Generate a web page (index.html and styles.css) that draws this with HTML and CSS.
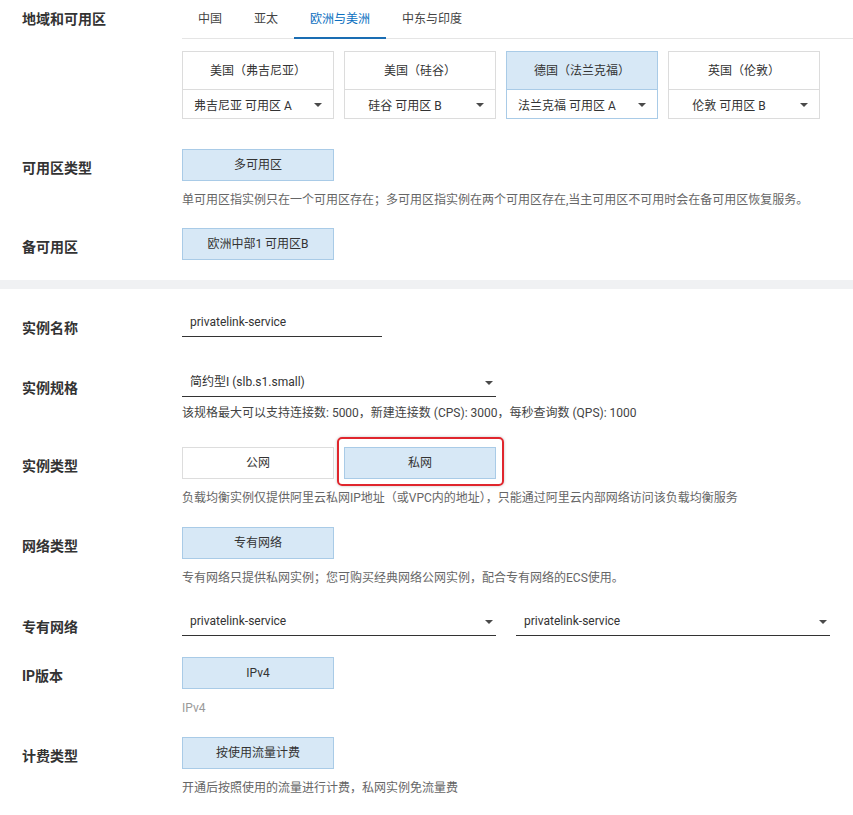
FILE: index.html
```html
<!DOCTYPE html>
<html lang="zh">
<head>
<meta charset="utf-8">
<link rel="stylesheet" href="styles.css">
</head>
<body>
<div class="section">
  <div class="row row-region">
    <div class="label label-region">地域和可用区</div>
    <div class="content">
      <div class="tabs">
        <div class="tab">中国</div>
        <div class="tab">亚太</div>
        <div class="tab active">欧洲与美洲</div>
        <div class="tab">中东与印度</div>
      </div>
      <div class="cards">
        <div class="card">
          <div class="card-head">美国（弗吉尼亚）</div>
          <div class="card-sel"><span class="card-text">弗吉尼亚 可用区 A</span><span class="card-caret"><i class="caret"></i></span></div>
        </div>
        <div class="card">
          <div class="card-head">美国（硅谷）</div>
          <div class="card-sel"><span class="card-text">硅谷 可用区 B</span><span class="card-caret"><i class="caret"></i></span></div>
        </div>
        <div class="card selected">
          <div class="card-head">德国（法兰克福）</div>
          <div class="card-sel"><span class="card-text">法兰克福 可用区 A</span><span class="card-caret"><i class="caret"></i></span></div>
        </div>
        <div class="card">
          <div class="card-head">英国（伦敦）</div>
          <div class="card-sel"><span class="card-text">伦敦 可用区 B</span><span class="card-caret"><i class="caret"></i></span></div>
        </div>
      </div>
    </div>
  </div>

  <div class="row mt30">
    <div class="label">可用区类型</div>
    <div class="content">
      <div class="btn-group"><div class="btn on">多可用区</div></div>
      <div class="desc">单可用区指实例只在一个可用区存在；多可用区指实例在两个可用区存在,当主可用区不可用时会在备可用区恢复服务。</div>
    </div>
  </div>

  <div class="row mt19">
    <div class="label">备可用区</div>
    <div class="content">
      <div class="btn-group"><div class="btn on">欧洲中部1 可用区B</div></div>
    </div>
  </div>
</div>

<div class="divider"></div>

<div class="section section-2">
  <div class="row mt20">
    <div class="label">实例名称</div>
    <div class="content">
      <div class="field w200">privatelink-service</div>
    </div>
  </div>

  <div class="row mt31">
    <div class="label">实例规格</div>
    <div class="content">
      <div class="field w314 select"><span>简约型I (slb.s1.small)</span><i class="caret"></i></div>
      <div class="desc desc-tight">该规格最大可以支持连接数: 5000，新建连接数 (CPS): 3000，每秒查询数 (QPS): 1000</div>
    </div>
  </div>

  <div class="row mt25">
    <div class="label">实例类型</div>
    <div class="content">
      <div class="btn-group">
        <div class="btn">公网</div>
        <div class="btn on highlighted">私网<span class="highlight"></span></div>
      </div>
      <div class="desc">负载均衡实例仅提供阿里云私网IP地址（或VPC内的地址），只能通过阿里云内部网络访问该负载均衡服务</div>
    </div>
  </div>

  <div class="row mt20">
    <div class="label">网络类型</div>
    <div class="content">
      <div class="btn-group"><div class="btn on">专有网络</div></div>
      <div class="desc">专有网络只提供私网实例；您可购买经典网络公网实例，配合专有网络的ECS使用。</div>
    </div>
  </div>

  <div class="row mt21">
    <div class="label">专有网络</div>
    <div class="content">
      <div class="field-pair">
        <div class="field w314 select"><span>privatelink-service</span><i class="caret"></i></div>
        <div class="field w314 select"><span>privatelink-service</span><i class="caret"></i></div>
      </div>
    </div>
  </div>

  <div class="row mt20">
    <div class="label">IP版本</div>
    <div class="content">
      <div class="btn-group"><div class="btn on">IPv4</div></div>
      <div class="desc light">IPv4</div>
    </div>
  </div>

  <div class="row mt20">
    <div class="label">计费类型</div>
    <div class="content">
      <div class="btn-group"><div class="btn on">按使用流量计费</div></div>
      <div class="desc">开通后按照使用的流量进行计费，私网实例免流量费</div>
    </div>
  </div>
</div>
</body>
</html>
```

FILE: styles.css
```css
* { box-sizing: border-box; }

html, body {
  margin: 0;
  padding: 0;
  background: #ffffff;
}

body {
  font-family: Roboto, "Noto Sans CJK SC", "Noto Sans", sans-serif;
  font-size: 12px;
  color: #333333;
  width: 853px;
  overflow: hidden;
}

.section {
  padding-bottom: 20px;
}

.section-2 {
  padding-bottom: 19px;
}

.divider {
  height: 9px;
  background: #f0f1f3;
}

.row {
  display: flex;
  align-items: flex-start;
  padding-left: 22px;
}

.mt19 { margin-top: 19px; }
.mt20 { margin-top: 20px; }
.mt21 { margin-top: 21px; }
.mt25 { margin-top: 25px; }
.mt30 { margin-top: 30px; }
.mt31 { margin-top: 31px; }

.label {
  width: 160px;
  flex: none;
  font-size: 14px;
  font-weight: 700;
  line-height: 20px;
  padding-top: 9px;
  color: #333333;
}

.label-region {
  padding-top: 9px;
}

.content {
  flex: 1;
  min-width: 0;
}

/* Tabs */
.tabs {
  display: flex;
  height: 39px;
  border-bottom: 1px solid #e5e5e5;
}

.tab {
  padding: 0 16px;
  line-height: 38px;
  height: 39px;
  color: #444444;
  font-size: 12px;
}

.tab.active {
  color: #0b6fc0;
  border-bottom: 2px solid #1a6db3;
  height: 39px;
  line-height: 38px;
}

/* Region cards */
.cards {
  display: flex;
  gap: 10px;
  margin-top: 12px;
}

.card {
  width: 152px;
  border: 1px solid #dcdcdc;
  background: #ffffff;
}

.card-head {
  height: 38px;
  line-height: 38px;
  text-align: center;
  border-bottom: 1px solid #dcdcdc;
  color: #333333;
}

.card-sel {
  display: flex;
  height: 28px;
  align-items: center;
  padding-top: 1px;
}

.card-text {
  flex: 1;
  text-align: center;
  color: #333333;
  white-space: nowrap;
}

.card-caret {
  width: 30px;
  flex: none;
  display: flex;
  justify-content: center;
}

.card.selected {
  border-color: #a9cbe7;
}

.card.selected .card-head {
  background: #d7e8f6;
  border-bottom-color: #a9cbe7;
}

.caret {
  display: inline-block;
  width: 0;
  height: 0;
  border-left: 4px solid transparent;
  border-right: 4px solid transparent;
  border-top: 4px solid #4a4a4a;
}

/* Buttons */
.btn-group {
  display: flex;
  gap: 10px;
}

.btn {
  position: relative;
  width: 152px;
  height: 32px;
  line-height: 30px;
  text-align: center;
  border: 1px solid #dddddd;
  background: #ffffff;
  color: #333333;
  font-size: 12px;
}

.btn.on {
  background: #d7e8f6;
  border-color: #a9cbe7;
}

.highlight {
  position: absolute;
  left: -8px;
  right: -9px;
  top: -11px;
  bottom: -8px;
  border: 2px solid #e0262d;
  border-radius: 5px;
  box-shadow: 0 0 3px rgba(0, 0, 0, 0.25);
  pointer-events: none;
}

/* Descriptions */
.desc {
  margin-top: 10px;
  line-height: 18px;
  color: #666666;
  font-size: 12px;
  white-space: nowrap;
}

.desc-tight {
  margin-top: 7px;
  color: #444444;
}

.desc.light {
  color: #999999;
}

/* Fields */
.field {
  height: 28px;
  border-bottom: 1px solid #333333;
  padding: 0 3px 0 8px;
  line-height: 27px;
  color: #333333;
  font-size: 12px;
}

.w200 { width: 200px; }
.w314 { width: 314px; }

.select {
  display: flex;
  align-items: center;
  justify-content: space-between;
}

.field-pair {
  display: flex;
  gap: 20px;
}
```
